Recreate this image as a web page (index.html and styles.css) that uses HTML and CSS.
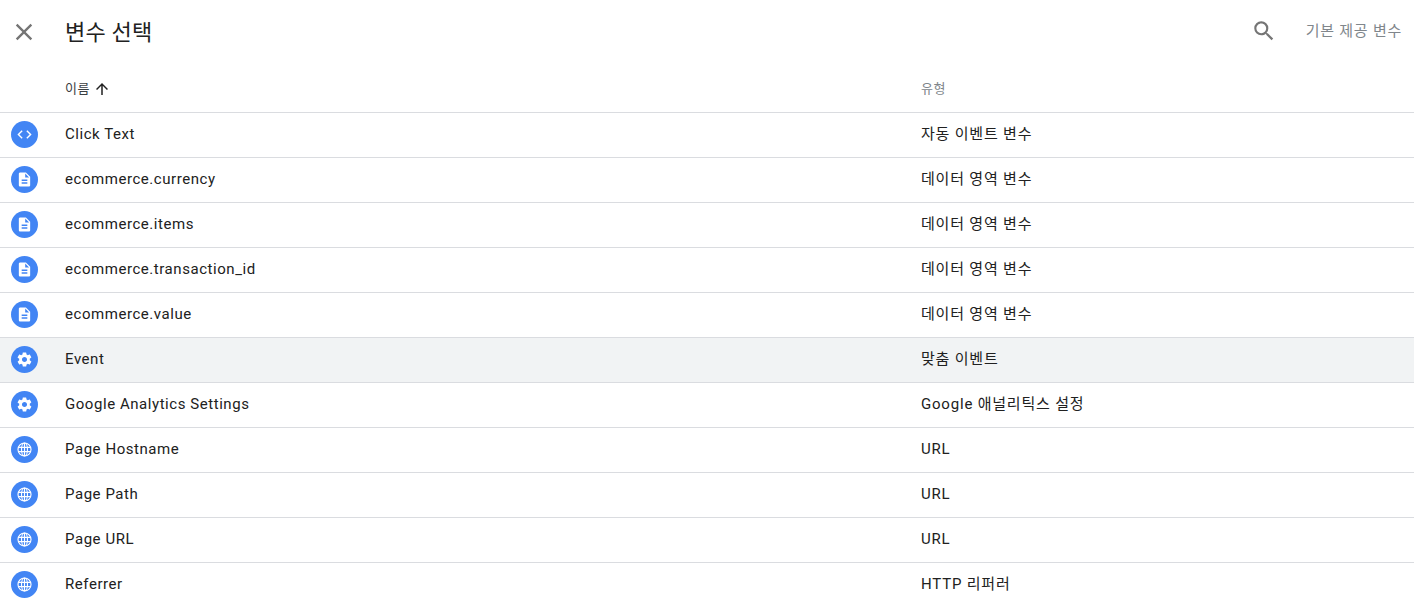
FILE: index.html
```html
<!DOCTYPE html>
<html lang="ko">
  <head>
    <title>변수 선택</title>
    <meta charset="UTF-8" />
    <link rel="stylesheet" href="styles.css">
  </head>
  <body>
    <svg class="icon-defs" width="0" height="0">
      <defs>
        <symbol id="i-code" viewBox="0 0 24 24"><path d="M9.4 16.6 4.8 12l4.6-4.6L8 6l-6 6 6 6 1.4-1.4zm5.2 0 4.6-4.6-4.6-4.6L16 6l6 6-6 6-1.4-1.4z"/></symbol>
        <symbol id="i-doc" viewBox="0 0 24 24"><path d="M14 2H6c-1.1 0-2 .9-2 2v16c0 1.100.9 2 2 2h12c1.100 0 2-.9 2-2V8l-6-6zm2 16H8v-2h8v2zm0-4H8v-2h8v2zm-3-5V3.500L18.500 9H13z"/></symbol>
        <symbol id="i-gear" viewBox="0 0 24 24"><path d="M19.400 13c.04-.3.06-.65.06-1s-.02-.7-.07-1l2.110-1.650c.19-.15.240-.42.120-.64l-2-3.460c-.12-.22-.39-.3-.61-.22l-2.490 1c-.52-.4-1.080-.73-1.690-.98l-.38-2.650A.488.488 0 0 0 14 2h-4c-.25 0-.46.18-.49.42l-.38 2.650c-.61.25-1.170.59-1.690.98l-2.490-1c-.23-.09-.49 0-.61.22l-2 3.460c-.13.220-.07.490.12.640L4.570 11c-.04.320-.07.650-.07 1s.03.680.07 1l-2.110 1.650c-.19.150-.24.420-.12.640l2 3.460c.12.220.39.300.61.220l2.490-1c.52.400 1.080.730 1.690.980l.38 2.650c.03.240.24.420.49.420h4c.25 0 .46-.18.49-.42l.38-2.650c.61-.25 1.170-.59 1.690-.98l2.490 1c.23.090.49 0 .61-.22l2-3.460c.12-.22.070-.49-.12-.64L19.400 13zM12 15.600c-1.980 0-3.600-1.620-3.600-3.600s1.620-3.600 3.600-3.600 3.600 1.620 3.600 3.600-1.620 3.600-3.600 3.600z"/></symbol>
        <symbol id="i-globe" viewBox="0 0 24 24">
          <g fill="none" stroke="currentColor" stroke-width="1.600">
            <circle cx="12" cy="12" r="9.200"/>
            <ellipse cx="12" cy="12" rx="4.200" ry="9.200"/>
            <path d="M12 2.800v18.400M3.200 9h17.600M3.200 15h17.600"/>
          </g>
        </symbol>
      </defs>
    </svg>

    <header class="top-bar">
      <button class="close-btn" aria-label="닫기">
        <svg viewBox="0 0 24 24"><path d="M19 6.410 17.590 5 12 10.590 6.410 5 5 6.410 10.590 12 5 17.590 6.410 19 12 13.410 17.590 19 19 17.590 13.410 12z"/></svg>
      </button>
      <h1 class="title">변수 선택</h1>
      <button class="search-btn" aria-label="검색">
        <svg viewBox="0 0 24 24"><path d="M15.500 14h-.79l-.28-.27A6.470 6.470 0 0 0 16 9.500 6.500 6.500 0 1 0 9.500 16c1.610 0 3.090-.59 4.230-1.570l.27.28v.79l5 4.990L20.490 19l-4.990-5zm-6 0C7.010 14 5 11.990 5 9.500S7.010 5 9.500 5 14 7.010 14 9.500 11.990 14 9.500 14z"/></svg>
      </button>
      <span class="builtin-link">기본 제공 변수</span>
    </header>

    <div class="table-head">
      <div class="col-name">
        이름
        <svg class="sort-arrow" viewBox="0 0 24 24"><path d="M4 12l1.410 1.410L11 7.830V20h2V7.830l5.580 5.590L20 12l-8-8-8 8z"/></svg>
      </div>
      <div class="col-type">유형</div>
    </div>

    <div class="table-body">
      <div class="row">
        <div class="badge"><svg><use href="#i-code"/></svg></div>
        <div class="col-name">Click Text</div>
        <div class="col-type">자동 이벤트 변수</div>
      </div>
      <div class="row">
        <div class="badge"><svg><use href="#i-doc"/></svg></div>
        <div class="col-name">ecommerce.currency</div>
        <div class="col-type">데이터 영역 변수</div>
      </div>
      <div class="row">
        <div class="badge"><svg><use href="#i-doc"/></svg></div>
        <div class="col-name">ecommerce.items</div>
        <div class="col-type">데이터 영역 변수</div>
      </div>
      <div class="row">
        <div class="badge"><svg><use href="#i-doc"/></svg></div>
        <div class="col-name">ecommerce.transaction_id</div>
        <div class="col-type">데이터 영역 변수</div>
      </div>
      <div class="row">
        <div class="badge"><svg><use href="#i-doc"/></svg></div>
        <div class="col-name">ecommerce.value</div>
        <div class="col-type">데이터 영역 변수</div>
      </div>
      <div class="row row-hover">
        <div class="badge"><svg><use href="#i-gear"/></svg></div>
        <div class="col-name">Event</div>
        <div class="col-type">맞춤 이벤트</div>
      </div>
      <div class="row">
        <div class="badge"><svg><use href="#i-gear"/></svg></div>
        <div class="col-name">Google Analytics Settings</div>
        <div class="col-type">Google 애널리틱스 설정</div>
      </div>
      <div class="row">
        <div class="badge"><svg><use href="#i-globe"/></svg></div>
        <div class="col-name">Page Hostname</div>
        <div class="col-type">URL</div>
      </div>
      <div class="row">
        <div class="badge"><svg><use href="#i-globe"/></svg></div>
        <div class="col-name">Page Path</div>
        <div class="col-type">URL</div>
      </div>
      <div class="row">
        <div class="badge"><svg><use href="#i-globe"/></svg></div>
        <div class="col-name">Page URL</div>
        <div class="col-type">URL</div>
      </div>
      <div class="row">
        <div class="badge"><svg><use href="#i-globe"/></svg></div>
        <div class="col-name">Referrer</div>
        <div class="col-type">HTTP 리퍼러</div>
      </div>
    </div>
  </body>
</html>
```

FILE: styles.css
```css
html,
body {
  height: 100%;
  overflow: hidden;
}

body {
  margin: 0;
  background-color: #fff;
  color: #212121;
  font-family: Roboto, "Noto Sans CJK KR", sans-serif;
  font-size: 15px;
  line-height: 20px;
}

.icon-defs {
  display: block;
  height: 0;
}

.top-bar {
  display: flex;
  align-items: center;
  height: 64px;
  padding-right: 12px;
}

.close-btn,
.search-btn {
  display: flex;
  padding: 0;
  border: 0;
  background: none;
  fill: #757575;
}

.close-btn {
  margin-left: 10px;
  width: 28px;
  height: 28px;
}

.close-btn svg {
  width: 28px;
  height: 28px;
}

.title {
  margin: 2px 0 0 27px;
  flex: 1;
  font-size: 22px;
  font-weight: 400;
  line-height: 28px;
  letter-spacing: 0.2px;
}

.search-btn {
  width: 26px;
  height: 26px;
  margin: 0 29px 2px 0;
}

.search-btn svg {
  width: 26px;
  height: 26px;
}

.builtin-link {
  padding-bottom: 2px;
  color: #80868b;
  letter-spacing: 0.75px;
}

.table-head {
  display: flex;
  align-items: center;
  box-sizing: border-box;
  height: 49px;
  padding: 2px 0 0 65px;
  border-bottom: 1px solid #dadce0;
  font-size: 13px;
  letter-spacing: 0.5px;
}

.table-head .col-name {
  display: flex;
  align-items: center;
  gap: 3px;
  color: #3c4043;
}

.table-head .col-type {
  color: #80868b;
}

.sort-arrow {
  width: 18px;
  height: 18px;
  fill: #212121;
}

.col-name {
  width: 856px;
}

.row {
  display: flex;
  align-items: center;
  height: 44px;
  border-bottom: 1px solid #dadce0;
  letter-spacing: 0.55px;
}

.row .col-name,
.row .col-type {
  padding-bottom: 2px;
}

.row .col-type {
  letter-spacing: 0.8px;
}

.row-hover {
  background-color: #f1f3f4;
}

.badge {
  display: flex;
  align-items: center;
  justify-content: center;
  width: 27px;
  height: 27px;
  margin: 0 27px 2px 11px;
  border-radius: 50%;
  background-color: #4285f4;
  color: #fff;
  fill: #fff;
}

.badge svg {
  width: 17px;
  height: 17px;
}
```
